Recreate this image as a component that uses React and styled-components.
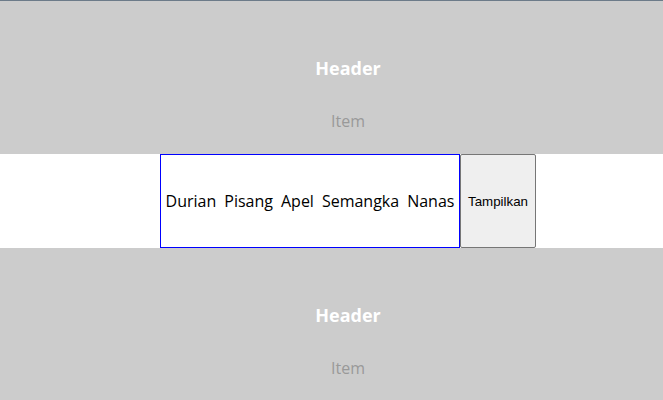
import React from "react";
import styled, { createGlobalStyle } from "styled-components";

const fruits = ["Durian", "Pisang", "Apel", "Semangka", "Nanas"];

const GlobalStyle = createGlobalStyle`
  body {
    margin: 0;
    font-family: "Open Sans", "DejaVu Sans", sans-serif;
    overflow: hidden;
  }
`;

export default function App() {
  return (
    <Page>
      <GlobalStyle />
      <Section top>
        <Header>Header</Header>
        <Item>Item</Item>
      </Section>
      <FruitRow>
        <FruitBox>
          {fruits.map((name) => (
            <Fruit key={name}>{name}</Fruit>
          ))}
        </FruitBox>
        <ShowButton>Tampilkan</ShowButton>
      </FruitRow>
      <Section>
        <Header>Header</Header>
        <Item>Item</Item>
      </Section>
    </Page>
  );
}

const Page = styled.div`
  width: 696px;
`;

const Section = styled.section`
  height: 154px;
  border-top: ${(p) => (p.top ? "1px solid #6c7b89" : "none")};
  background: #cccccc;
  display: flex;
  flex-direction: column;
  align-items: center;
  padding-top: 55px;
  box-sizing: border-box;
  gap: 30px;
`;

const Header = styled.div`
  font-weight: 700;
  font-size: 18px;
  line-height: 24px;
  color: #ffffff;
`;

const Item = styled.div`
  font-size: 16px;
  line-height: 22px;
  color: #999999;
`;

const FruitRow = styled.div`
  height: 94px;
  background: #ffffff;
  display: flex;
  justify-content: center;
`;

const FruitBox = styled.div`
  width: 300px;
  box-sizing: border-box;
  border: 1px solid #0000ff;
  display: flex;
  align-items: center;
  justify-content: center;
  padding: 0 4px;
`;

const Fruit = styled.span`
  font-size: 16px;
  color: #000000;
  padding: 0 4px;
`;

const ShowButton = styled.button`
  width: 76px;
  box-sizing: border-box;
  background: #efefef;
  border: 1px solid #767676;
  border-radius: 2px;
  font-family: "Liberation Sans", Arial, sans-serif;
  font-size: 13.33px;
  color: #000000;
  padding: 0 6px;
`;
